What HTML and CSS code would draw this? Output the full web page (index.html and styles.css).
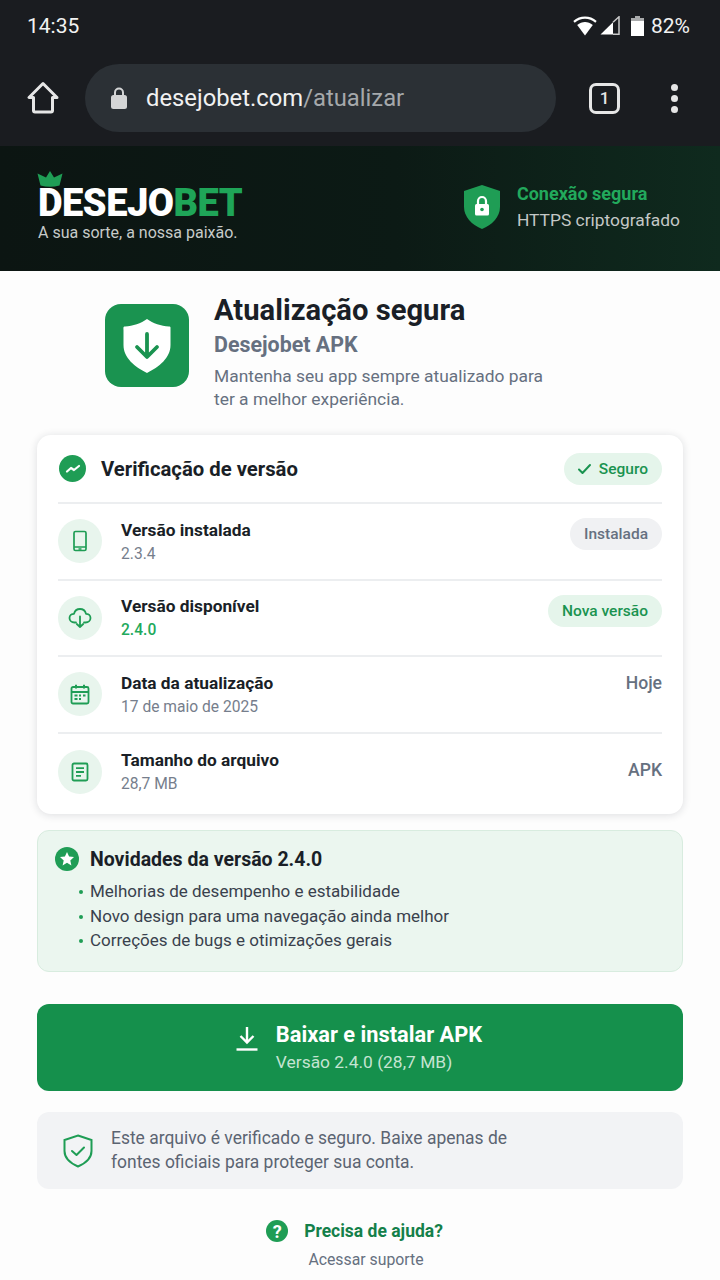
FILE: index.html
```html
<!DOCTYPE html>
<html lang="pt-BR">
<head>
  <meta charset="utf-8">
  <title>Desejobet - Atualizar</title>
  <link rel="stylesheet" href="styles.css">
</head>
<body>
  <div class="status-bar">
    <span class="status-time">14:35</span>
    <div class="status-icons">
      <svg class="icon-wifi" width="24" height="20" viewBox="0 0 24 20"><path fill="none" stroke="#fff" stroke-width="2.200" d="M1 5.800C7.500 .2 16.500 .2 23 5.800"/><path fill="#fff" d="M4.200 9C9 5 15 5 19.800 9L12 19.500Z"/></svg>
      <svg class="icon-signal" width="20" height="19" viewBox="0 0 20 19"><path fill="#fff" d="M.5 18.500 13 6.200V18.500Z"/><path fill="none" stroke="#c9c9c9" stroke-width="1.500" d="M13 6.200 19 .8V18.200H13"/></svg>
      <svg class="icon-battery" width="13" height="20" viewBox="0 0 13 20"><path fill="#a9aaab" d="M4 0H9V2H13V6H0V2H4Z"/><path fill="#fff" d="M0 5H13V20H0Z"/></svg>
      <span class="status-pct">82%</span>
    </div>
  </div>

  <div class="toolbar">
    <svg class="home-icon" width="34" height="34" viewBox="0 0 34 34"><path fill="none" stroke="#e6e6e6" stroke-width="3" stroke-linejoin="round" d="M17 2.500 3 16.500H7.500V29.500Q7.500 31 9 31H25Q26.500 31 26.500 29.500V16.500H31Z"/></svg>
    <div class="url-bar">
      <svg width="18" height="24" viewBox="0 0 18 24"><path fill="none" stroke="#d4d5d6" stroke-width="2" d="M5 11V6.500a4 4 0 0 1 8 0V11"/><rect x="1" y="9" width="16" height="14" rx="2.500" fill="#d4d5d6"/></svg>
      <span class="url-text">desejobet.com<span class="url-path">/atualizar</span></span>
    </div>
    <div class="tab-count">1</div>
    <div class="menu-dots"><i></i><i></i><i></i></div>
  </div>

  <header class="hero">
    <div class="brand">
      <svg class="crown" width="26" height="16" viewBox="0 0 26 16"><path fill="#1f9d55" d="M13 0 17 6.500 25.500 2.500 22.500 14.500Q13 17 3.500 14.500L.5 2.500 9 6.500Z"/></svg>
      <div class="brand-name">DESEJO<span class="brand-bet">BET</span></div>
      <div class="brand-tag">A sua sorte, a nossa paixão.</div>
    </div>
    <div class="secure">
      <svg width="38" height="44" viewBox="0 0 38 44"><path fill="#1f9d55" d="M19 0 37 6V22C37 32 29 40 19 44 9 40 1 32 1 22V6Z"/><rect x="12" y="19" width="14" height="11.500" rx="1.500" fill="#fff"/><path fill="none" stroke="#fff" stroke-width="2.200" d="M15 19.500V16a4 4 0 0 1 8 0v3.500"/><circle cx="19" cy="24.500" r="1.800" fill="#1f9d55"/></svg>
      <div>
        <div class="secure-title">Conexão segura</div>
        <div class="secure-sub">HTTPS criptografado</div>
      </div>
    </div>
  </header>

  <main class="content">
    <section class="app-head">
      <div class="app-icon">
        <svg width="48" height="54" viewBox="0 0 48 54"><path fill="#fff" d="M24 0C30 4.500 38 7 46 7.500 48 7.500 47.500 9 47.500 11V26C47.500 39 36 48 24 54 12 48 .5 39 .5 26V11C.5 9 0 7.500 2 7.500 10 7 18 4.500 24 0Z"/><path fill="none" stroke="#1a9350" stroke-width="3.800" stroke-linecap="round" stroke-linejoin="round" d="M24 15V37M14 28 24 38 34 28"/></svg>
      </div>
      <div class="app-text">
        <h1>Atualização segura</h1>
        <h2>Desejobet APK</h2>
        <p>Mantenha seu app sempre atualizado para ter a melhor experiência.</p>
      </div>
    </section>

    <section class="card">
      <div class="card-head">
        <span class="round-check">
          <svg width="18" height="18" viewBox="0 0 18 18"><path fill="none" stroke="#fff" stroke-width="2.200" stroke-linecap="round" stroke-linejoin="round" d="M3 11.500 7 8 10 10 15 6"/></svg>
        </span>
        <span class="card-title">Verificação de versão</span>
        <span class="pill pill-green pill-seguro">
          <svg width="15" height="12" viewBox="0 0 15 12"><path fill="none" stroke="#1a9350" stroke-width="2" stroke-linecap="round" stroke-linejoin="round" d="M2 6.500 5.500 10 13 2"/></svg>
          Seguro
        </span>
      </div>

      <div class="row">
        <span class="row-icon">
          <svg width="22" height="22" viewBox="0 0 22 22" fill="none" stroke="#1f9d55" stroke-width="1.700"><rect x="5" y="1.500" width="12" height="19" rx="1.500"/><path d="M5 17H17M9.500 19H12.500"/></svg>
        </span>
        <div class="row-text">
          <div class="row-title">Versão instalada</div>
          <div class="row-sub">2.3.4</div>
        </div>
        <span class="pill pill-gray">Instalada</span>
      </div>

      <div class="row">
        <span class="row-icon">
          <svg width="24" height="22" viewBox="0 0 24 22" fill="none" stroke="#1f9d55" stroke-width="1.800" stroke-linecap="round" stroke-linejoin="round"><path d="M8 15.500H6.500C3.500 15.500 1.500 13.500 1.500 11S3.500 6.800 6 6.800C6.800 3.800 9.200 2 12 2s5.200 1.800 6 4.800c2.500 0 4.500 1.700 4.500 4.200s-2 4.500-5 4.500H16"/><path d="M12 9.500V20M8.800 17 12 20 15.200 17"/></svg>
        </span>
        <div class="row-text">
          <div class="row-title">Versão disponível</div>
          <div class="row-sub row-sub-green">2.4.0</div>
        </div>
        <span class="pill pill-green">Nova versão</span>
      </div>

      <div class="row">
        <span class="row-icon">
          <svg width="20" height="21" viewBox="0 0 20 21" fill="none" stroke="#1f9d55" stroke-width="1.800"><rect x="1.500" y="3" width="17" height="16.500" rx="1.500"/><path d="M1.500 8H18.500M6 .8V4.500M14 .8V4.500" stroke-width="2"/><path d="M4.500 11.500H7.500M9 11.500H11M13 11.500H15.500M4.500 15H7.500M9 15H11" stroke-width="1.800"/></svg>
        </span>
        <div class="row-text">
          <div class="row-title">Data da atualização</div>
          <div class="row-sub">17 de maio de 2025</div>
        </div>
        <span class="row-value row-value-top">Hoje</span>
      </div>

      <div class="row">
        <span class="row-icon">
          <svg width="18" height="20" viewBox="0 0 18 20" fill="none" stroke="#1f9d55" stroke-width="1.800"><rect x="1.500" y="1.500" width="15" height="17" rx="1.500"/><path d="M5 6.200H13M5 10H13M5 13.800H10"/></svg>
        </span>
        <div class="row-text">
          <div class="row-title">Tamanho do arquivo</div>
          <div class="row-sub">28,7 MB</div>
        </div>
        <span class="row-value row-value-last">APK</span>
      </div>
    </section>

    <section class="news">
      <div class="news-head">
        <span class="star-badge">
          <svg width="16" height="16" viewBox="0 0 16 16"><path fill="#fff" d="M8 1 10.100 5.600 15 6.100 11.300 9.400 12.400 14.400 8 11.800 3.600 14.400 4.700 9.400 1 6.100 5.900 5.600Z"/></svg>
        </span>
        <span class="news-title">Novidades da versão 2.4.0</span>
      </div>
      <ul class="news-list">
        <li>Melhorias de desempenho e estabilidade</li>
        <li>Novo design para uma navegação ainda melhor</li>
        <li>Correções de bugs e otimizações gerais</li>
      </ul>
    </section>

    <a class="download" href="#">
      <svg class="download-icon" width="22" height="25" viewBox="0 0 22 25" fill="none" stroke="#fff" stroke-width="2.400"><path d="M11 1V16.500M4.500 10 11 16.500 17.500 10"/><path d="M.5 23.500H21.500"/></svg>
      <span class="download-text">
        <span class="download-title">Baixar e instalar APK</span>
        <span class="download-sub">Versão 2.4.0 (28,7 MB)</span>
      </span>
    </a>

    <section class="notice">
      <svg width="30" height="34" viewBox="0 0 30 34" fill="none" stroke="#1f9d55" stroke-width="2"><path d="M15 1.500 28.500 6V17C28.500 24.500 22 29.500 15 32.500 8 29.500 1.500 24.500 1.500 17V6Z"/><path stroke-linecap="round" stroke-linejoin="round" d="M9 17 13.500 21 21 13.500"/></svg>
      <p>Este arquivo é verificado e seguro. Baixe apenas de fontes oficiais para proteger sua conta.</p>
    </section>

    <footer class="help">
      <div class="help-line">
        <span class="help-badge">?</span>
        <span class="help-title">Precisa de ajuda?</span>
      </div>
      <div class="help-link">Acessar suporte</div>
    </footer>
  </main>
</body>
</html>
```

FILE: styles.css
```css
* {
  box-sizing: border-box;
}

body {
  margin: 0;
  width: 720px;
  height: 1280px;
  overflow: hidden;
  background-color: #fdfdfd;
  font-family: 'Roboto', 'Liberation Sans', sans-serif;
  color: #1a1f27;
}

/* Android status bar + browser toolbar */
.status-bar {
  height: 46px;
  padding: 5px 30px 0 27px;
  display: flex;
  justify-content: space-between;
  align-items: center;
  background-color: #1a1c20;
  color: #f2f2f2;
}

.status-time {
  font-size: 21px;
}

.status-icons {
  display: flex;
  align-items: center;
}

.icon-signal {
  margin-left: 3px;
}

.icon-battery {
  margin-left: 11px;
}

.status-pct {
  margin-left: 7px;
  font-size: 21px;
}

.toolbar {
  height: 100px;
  padding: 4px 42px 0 26px;
  display: flex;
  align-items: center;
  background-color: #1a1c20;
}

.home-icon {
  flex: none;
}

.url-bar {
  width: 471px;
  height: 68px;
  margin-left: 25px;
  padding-left: 25px;
  display: flex;
  align-items: center;
  gap: 18px;
  border-radius: 34px;
  background-color: #2b3035;
}

.url-text {
  font-size: 23.800px;
  color: #f1f1f1;
}

.url-path {
  color: #a5a8ab;
}

.tab-count {
  width: 31px;
  height: 31px;
  margin-left: 33px;
  display: flex;
  align-items: center;
  justify-content: center;
  border: 3px solid #e6e6e6;
  border-radius: 7px;
  font-size: 17px;
  font-weight: 500;
  color: #e6e6e6;
}

.menu-dots {
  margin-left: auto;
  display: flex;
  flex-direction: column;
  gap: 4px;
}

.menu-dots i {
  width: 7px;
  height: 7px;
  border-radius: 50%;
  background-color: #e6e6e6;
}

/* Hero */
.hero {
  height: 125px;
  padding: 0 40px 0 38px;
  display: flex;
  justify-content: space-between;
  align-items: center;
  background: linear-gradient(90deg, #0c1512 0%, #0c1a15 55%, #0f2a1e 100%);
}

.brand {
  position: relative;
  padding-top: 10px;
}

.crown {
  position: absolute;
  left: -1px;
  top: -4px;
}

.brand-name {
  font-size: 38px;
  line-height: 36px;
  font-weight: 900;
  letter-spacing: -0.5px;
  color: #fff;
}

.brand-bet {
  color: #1fa558;
}

.brand-tag {
  margin-top: 2px;
  font-size: 16px;
  color: #c7cbc9;
}

.secure {
  margin-bottom: 4px;
  display: flex;
  align-items: center;
  gap: 16px;
}

.secure-title {
  font-size: 18px;
  font-weight: 700;
  color: #22a95c;
  margin-bottom: 6px;
}

.secure-sub {
  font-size: 17.400px;
  color: #c4c8c6;
}

/* Main column */
.content {
  padding: 33px 37px 0;
}

.app-head {
  padding-left: 68px;
  display: flex;
  gap: 25px;
}

.app-icon {
  flex: none;
  width: 84px;
  height: 83px;
  display: flex;
  align-items: center;
  justify-content: center;
  border-radius: 16px;
  background-color: #1a9350;
}

.app-text h1 {
  margin: -11px 0 0;
  font-size: 29.200px;
  line-height: 34px;
  font-weight: 700;
  color: #1a1f27;
}

.app-text h2 {
  margin: 5px 0 0;
  font-size: 21.400px;
  line-height: 26px;
  font-weight: 700;
  color: #667080;
}

.app-text p {
  width: 345px;
  margin: 7px 0 0;
  font-size: 17.400px;
  line-height: 23px;
  color: #667080;
}

.card {
  height: 379px;
  margin-top: 24px;
  padding: 0 21px;
  border-radius: 14px;
  background-color: #fff;
  box-shadow: 0 1px 8px rgba(20, 30, 40, 0.14);
}

.card-head {
  height: 69px;
  display: flex;
  align-items: center;
  border-bottom: 2px solid #eceef0;
}

.round-check {
  width: 27px;
  height: 27px;
  margin-left: 1px;
  display: flex;
  align-items: center;
  justify-content: center;
  border-radius: 50%;
  background-color: #1f9d55;
}

.card-title {
  margin-left: 15px;
  font-size: 20.300px;
  font-weight: 700;
}

.pill {
  height: 32px;
  padding: 0 14px;
  display: inline-flex;
  align-items: center;
  border-radius: 16px;
  font-size: 15.500px;
  font-weight: 500;
  margin-left: auto;
}

.pill-green {
  background-color: #e5f5eb;
  color: #1a9350;
}

.pill-seguro {
  gap: 7px;
  padding-left: 13px;
}

.pill-gray {
  background-color: #f0f1f3;
  color: #667080;
}

.row {
  height: 76.500px;
  display: flex;
  align-items: center;
  border-bottom: 2px solid #eceef0;
}

.row:last-child {
  border-bottom: none;
}

.row .pill {
  margin-bottom: 14px;
}

.row-icon {
  flex: none;
  width: 44px;
  height: 44px;
  display: flex;
  align-items: center;
  justify-content: center;
  border-radius: 50%;
  background-color: #e8f5ed;
}

.row-text {
  margin-left: 19px;
}

.row-title {
  font-size: 17.300px;
  line-height: 22px;
  font-weight: 700;
  color: #1a1f27;
}

.row-sub {
  margin-top: 3px;
  font-size: 15.600px;
  line-height: 20px;
  color: #767e8c;
}

.row-sub-green {
  color: #22a95c;
  font-weight: 500;
}

.row-value {
  margin-left: auto;
  font-size: 17.600px;
  font-weight: 500;
  color: #667080;
}

.row-value-top {
  margin-bottom: 22px;
}

.row-value-last {
  margin-bottom: 4px;
}

.news {
  height: 142px;
  margin-top: 16px;
  padding: 16px 17px 0;
  border: 1px solid #d8ecdf;
  border-radius: 12px;
  background-color: #ebf6ef;
}

.news-head {
  display: flex;
  align-items: center;
  gap: 11px;
}

.star-badge {
  width: 24px;
  height: 24px;
  display: flex;
  align-items: center;
  justify-content: center;
  border-radius: 50%;
  background-color: #1f9d55;
}

.news-title {
  font-size: 19.500px;
  font-weight: 700;
}

.news-list {
  margin: 8px 0 0;
  padding: 0 0 0 24px;
  list-style: none;
  font-size: 17px;
  line-height: 24.500px;
  color: #39414d;
}

.news-list li {
  position: relative;
  padding-left: 11px;
}

.news-list li::before {
  content: "";
  position: absolute;
  left: 0;
  top: 11px;
  width: 4px;
  height: 4px;
  border-radius: 50%;
  background-color: #1f9d55;
}

.download {
  height: 87px;
  margin-top: 32px;
  padding-right: 2px;
  display: flex;
  align-items: center;
  justify-content: center;
  gap: 18px;
  border-radius: 12px;
  background-color: #15904c;
  text-decoration: none;
  color: #fff;
}

.download-icon {
  margin-bottom: 18px;
}

.download-text {
  display: flex;
  flex-direction: column;
}

.download-title {
  font-size: 21.800px;
  line-height: 28px;
  font-weight: 700;
}

.download-sub {
  font-size: 17.400px;
  line-height: 26px;
  color: #c5e4d2;
}

.notice {
  height: 77px;
  margin-top: 21px;
  padding-left: 26px;
  display: flex;
  align-items: center;
  gap: 18px;
  border-radius: 12px;
  background-color: #f2f3f5;
}

.notice p {
  width: 440px;
  margin: 0;
  font-size: 17.450px;
  line-height: 23.500px;
  color: #5b6472;
}

.help {
  margin-top: 31px;
  text-align: center;
}

.help-line {
  margin-right: 11px;
  display: flex;
  align-items: center;
  justify-content: center;
  gap: 16px;
}

.help-badge {
  width: 22px;
  height: 22px;
  display: flex;
  align-items: center;
  justify-content: center;
  border-radius: 50%;
  background-color: #1f9d55;
  color: #fff;
  font-size: 18px;
  font-weight: 700;
}

.help-title {
  font-size: 17.500px;
  font-weight: 700;
  color: #14804a;
}

.help-link {
  margin-top: 8px;
  margin-left: 12px;
  font-size: 15.800px;
  color: #667080;
}
```
